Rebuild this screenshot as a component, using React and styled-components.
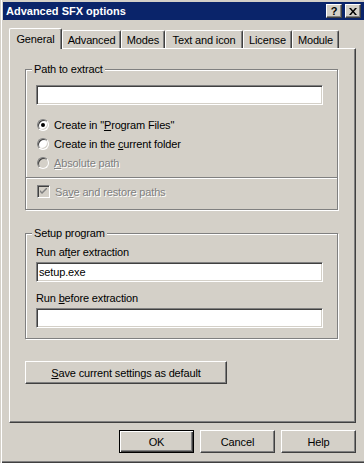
import React from 'react'
import styled, { createGlobalStyle } from 'styled-components'

const face = '#D4D0C8'
const shade = '#808080'
const dark = '#404040'

const GlobalStyle = createGlobalStyle`
  html, body { margin: 0; padding: 0; background: ${face}; }
  body {
    font-family: "Liberation Sans", Arial, sans-serif;
    font-size: 11px;
    letter-spacing: -0.15px;
    color: #000;
  }
  * { box-sizing: border-box; }
`

const Window = styled.div`
  width: 364px;
  height: 463px;
  background: ${face};
  padding: 2px 0 0 3px;
  display: flex;
  flex-direction: column;
  overflow: hidden;
  box-shadow: inset 1px 0 0 ${face}, inset 2px 0 0 #fff,
    inset 0 -1px 0 ${dark}, inset 0 -2px 0 ${shade};
`

const TitleBar = styled.div`
  height: 18px;
  background: #0a246a;
  color: #fff;
  font-weight: bold;
  letter-spacing: 0;
  display: flex;
  align-items: center;
  padding: 0 3px 0 3px;
  gap: 3px;
`

const TitleText = styled.span`
  flex: 1;
  line-height: 13px;
`

const CaptionButton = styled.div`
  width: 16px;
  height: 14px;
  background: ${face};
  color: #000;
  border: 1px solid;
  border-color: #fff ${dark} ${dark} #fff;
  box-shadow: inset -1px -1px 0 ${shade};
  display: flex;
  align-items: center;
  justify-content: center;
  font-size: 11px;
  font-weight: bold;
  line-height: 1;
`

const Body = styled.div`
  flex: 1;
  display: flex;
  flex-direction: column;
  padding: 8px 8px 0 6px;
`

const Tabs = styled.div`
  height: 20px;
  display: flex;
  align-items: flex-end;
  z-index: 1;
`

const Tab = styled.div`
  width: ${p => p.$w}px;
  height: ${p => (p.$active ? 21 : 18)}px;
  margin-bottom: ${p => (p.$active ? -1 : 0)}px;
  background: ${face};
  border-top: 1px solid #fff;
  border-left: 1px solid #fff;
  border-right: 1px solid ${dark};
  border-radius: 2px 2px 0 0;
  box-shadow: inset -1px 0 0 ${shade};
  display: flex;
  align-items: center;
  justify-content: center;
  padding-bottom: ${p => (p.$active ? 1 : 0)}px;
  white-space: nowrap;
`

const Panel = styled.div`
  width: 347px;
  height: 375px;
  border-top: 1px solid #fff;
  border-left: 1px solid #fff;
  border-right: 1px solid ${dark};
  border-bottom: 1px solid ${dark};
  box-shadow: inset -1px -1px 0 ${shade};
  padding: 14px 17px 0 15px;
  display: flex;
  flex-direction: column;
  align-items: flex-start;
`

const Group = styled.fieldset`
  width: 100%;
  margin: ${p => p.$top || 0}px 0 0;
  padding: ${p => p.$pt}px 14px ${p => p.$pb}px 10px;
  border: 1px solid ${shade};
  box-shadow: 1px 1px 0 #fff, inset 1px 1px 0 #fff;
  min-width: 0;
  display: flex;
  flex-direction: column;
`

const Legend = styled.legend`
  padding: 0 2px;
  margin-left: -4px;
  line-height: 13px;
  background: ${face};
`

const Field = styled.div`
  width: 100%;
  height: 20px;
  background: #fff;
  border: 1px solid;
  border-color: ${shade} #fff #fff ${shade};
  box-shadow: inset 1px 1px 0 ${dark}, inset -1px -1px 0 ${face};
  padding: 0 2px;
  display: flex;
  align-items: center;
  line-height: 13px;
`

const FieldLabel = styled.div`
  line-height: 13px;
  margin: ${p => p.$top}px 0 3px;
`

const Options = styled.div`
  margin-top: 10px;
  display: flex;
  flex-direction: column;
`

const OptionRow = styled.div`
  height: 19px;
  display: flex;
  align-items: center;
  gap: 5px;
  padding-left: 1px;
  color: ${p => (p.$disabled ? shade : '#000')};
  text-shadow: ${p => (p.$disabled ? '1px 1px 0 #fff' : 'none')};
`

const RadioCircle = styled.span`
  width: 12px;
  height: 12px;
  border-radius: 50%;
  border: 1px solid;
  border-color: ${shade} #fff #fff ${shade};
  box-shadow: inset 1px 1px 0 ${dark}, inset -1px -1px 0 ${face};
  background: ${p => (p.$disabled ? face : '#fff')};
  display: flex;
  align-items: center;
  justify-content: center;
  flex: none;
  &::after {
    content: '';
    width: 4px;
    height: 4px;
    border-radius: 50%;
    background: #000;
    display: ${p => (p.$checked ? 'block' : 'none')};
  }
`

const CheckBox = styled.span`
  width: 13px;
  height: 13px;
  border: 1px solid;
  border-color: ${shade} #fff #fff ${shade};
  box-shadow: inset 1px 1px 0 ${dark}, inset -1px -1px 0 ${face};
  background: ${face};
  display: flex;
  align-items: center;
  justify-content: center;
  flex: none;
`

const Separator = styled.div`
  height: 2px;
  margin: 5px -14px 3px -10px;
  border-top: 1px solid ${shade};
  border-bottom: 1px solid #fff;
`

const Button = styled.button`
  width: ${p => p.$w || 75}px;
  height: 23px;
  margin-top: ${p => p.$top || 0}px;
  padding: 0;
  background: ${face};
  font: inherit;
  letter-spacing: inherit;
  color: #000;
  border: 1px solid;
  border-color: ${p => (p.$default ? '#000' : `#fff ${dark} ${dark} #fff`)};
  box-shadow: ${p =>
    p.$default
      ? `inset 1px 1px 0 #fff, inset -1px -1px 0 ${dark}, inset -2px -2px 0 ${shade}`
      : `inset -1px -1px 0 ${shade}`};
`

const Footer = styled.div`
  display: flex;
  justify-content: flex-end;
  gap: 6px;
  margin-top: 7px;
`

const tabs = [
  ['General', 53],
  ['Advanced', 59],
  ['Modes', 44],
  ['Text and icon', 78],
  ['License', 49],
  ['Module', 47],
]

export default function App() {
  return (
    <>
      <GlobalStyle />
      <Window>
        <TitleBar>
          <TitleText>Advanced SFX options</TitleText>
          <CaptionButton>?</CaptionButton>
          <CaptionButton>
            <svg width="8" height="7" viewBox="0 0 8 7">
              <path d="M0 0h2l2 2.5L6 0h2L5 3.5 8 7H6L4 4.5 2 7H0l3-3.5z" fill="#000" />
            </svg>
          </CaptionButton>
        </TitleBar>
        <Body>
          <Tabs>
            {tabs.map(([t, w], i) => (
              <Tab key={t} $w={w} $active={i === 0}>{t}</Tab>
            ))}
          </Tabs>
          <Panel>
            <Group $pt={9} $pb={8}>
              <Legend>Path to extract</Legend>
              <Field />
              <Options>
                <OptionRow>
                  <RadioCircle $checked />
                  <span>Create in "<u>P</u>rogram Files"</span>
                </OptionRow>
                <OptionRow>
                  <RadioCircle />
                  <span>Create in the <u>c</u>urrent folder</span>
                </OptionRow>
                <OptionRow $disabled>
                  <RadioCircle $disabled />
                  <span><u>A</u>bsolute path</span>
                </OptionRow>
              </Options>
              <Separator />
              <OptionRow $disabled>
                <CheckBox>
                  <svg width="7" height="7" viewBox="0 0 7 7">
                    <path d="M0 2l2 2 5-5v2L2 6 0 4z" fill={shade} />
                  </svg>
                </CheckBox>
                <span>Sa<u>v</u>e and restore paths</span>
              </OptionRow>
            </Group>
            <Group $top={17} $pt={0} $pb={10}>
              <Legend>Setup program</Legend>
              <FieldLabel $top={6}>Run af<u>t</u>er extraction</FieldLabel>
              <Field>setup.exe</Field>
              <FieldLabel $top={10}>Run <u>b</u>efore extraction</FieldLabel>
              <Field />
            </Group>
            <Button $w={202} $top={22}><u>S</u>ave current settings as default</Button>
          </Panel>
          <Footer>
            <Button $default>OK</Button>
            <Button>Cancel</Button>
            <Button>Help</Button>
          </Footer>
        </Body>
      </Window>
    </>
  )
}
